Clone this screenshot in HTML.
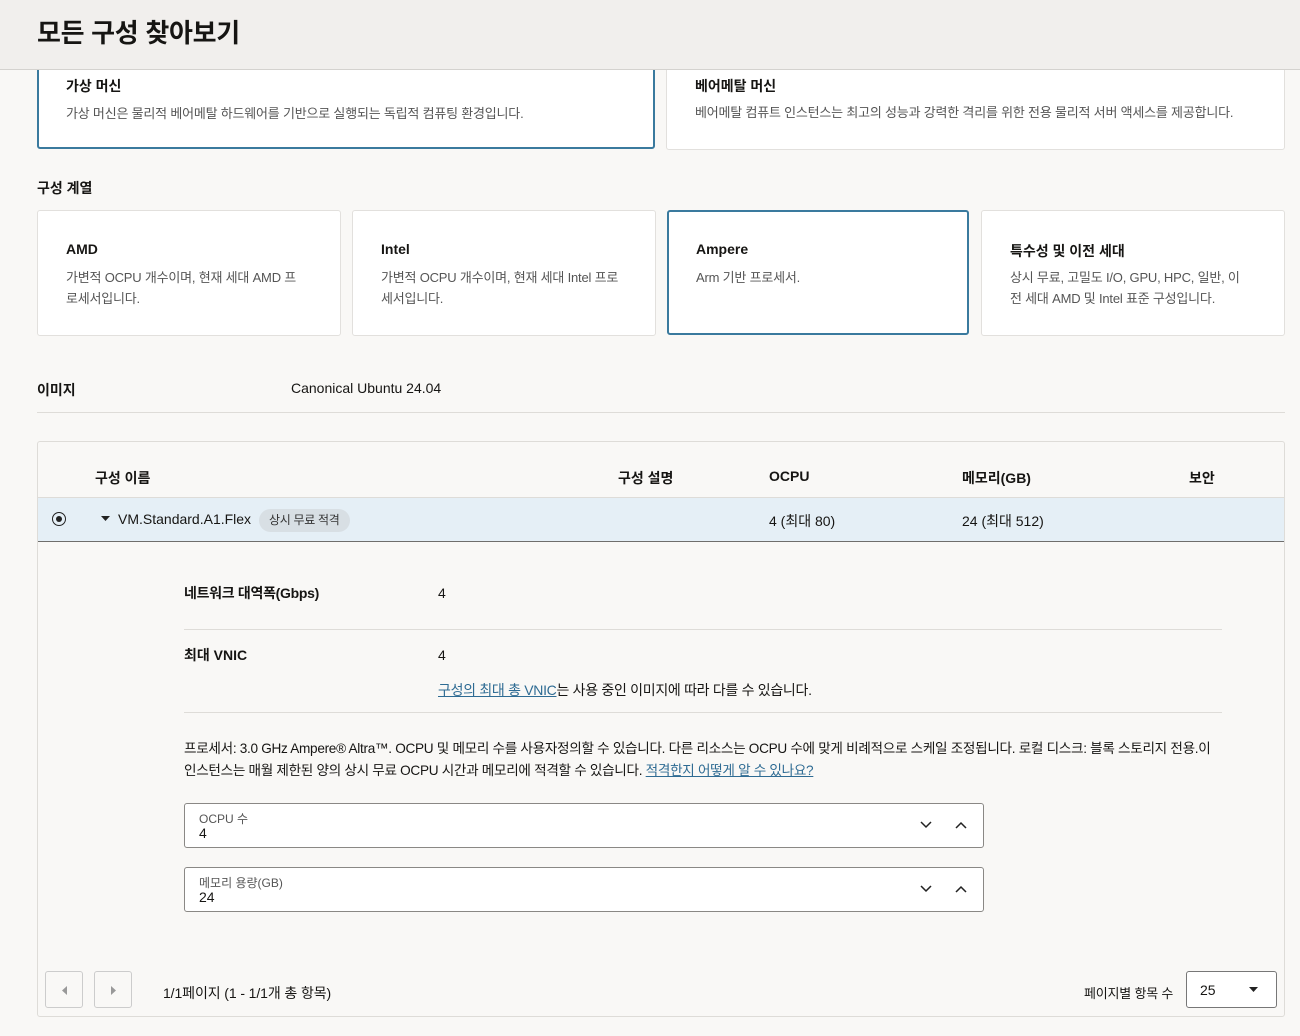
<!DOCTYPE html>
<html><head><meta charset="utf-8"><style>
*{margin:0;padding:0;box-sizing:border-box}
body{width:1300px;height:1036px;background:#f9f8f6;font-family:"Liberation Sans","Noto Sans CJK KR",sans-serif;color:#161513;position:relative;overflow:hidden;font-size:14px}
.a{position:absolute}
.card{position:absolute;background:#fff;border:1px solid #e2e0dd;border-radius:3px}
.sel{border:2px solid #3a7a9e}
.t{font-size:14px;font-weight:bold;position:absolute}
.d{font-size:13px;color:#555;position:absolute;line-height:21px;letter-spacing:-0.2px}
.line{position:absolute;height:1px;background:#dedcd8}
.inp{position:absolute;left:184px;width:800px;height:45px;background:#fff;border:1px solid #8a8885;border-radius:3px}
.inp .l{position:absolute;left:14px;top:6px;font-size:12px;color:#555}
.inp .v{position:absolute;left:14px;top:21px;font-size:14px}
.inp svg{position:absolute;top:17px}
.btn{position:absolute;top:971px;width:38px;height:37px;border:1px solid #ccc;border-radius:3px;background:#f9f8f6}
a{color:#2e6b93}
</style></head><body>
<div class="card sel" style="left:37px;top:50px;width:618px;height:99px"><div class="t" style="left:27px;top:24px">가상 머신</div><div class="d" style="left:27px;top:51px">가상 머신은 물리적 베어메탈 하드웨어를 기반으로 실행되는 독립적 컴퓨팅 환경입니다.</div></div>
<div class="card" style="left:666px;top:50px;width:619px;height:100px"><div class="t" style="left:28px;top:25px">베어메탈 머신</div><div class="d" style="left:28px;top:51px">베어메탈 컴퓨트 인스턴스는 최고의 성능과 강력한 격리를 위한 전용 물리적 서버 액세스를 제공합니다.</div></div>
<div class="a" style="left:0;top:0;width:1300px;height:70px;background:#f1efed;border-bottom:1px solid #d4d2cf"><div class="a" style="left:37px;top:13px;font-size:26px;font-weight:bold;letter-spacing:-0.3px">모든 구성 찾아보기</div></div>
<div class="a" style="left:37px;top:178px;font-size:14px;font-weight:bold">구성 계열</div>
<div class="card" style="left:37px;top:210px;width:304px;height:126px"><div class="t" style="left:28px;top:30px">AMD</div><div class="d" style="left:28px;top:56px;width:238px">가변적 OCPU 개수이며, 현재 세대 AMD 프로세서입니다.</div></div>
<div class="card" style="left:352px;top:210px;width:304px;height:126px"><div class="t" style="left:28px;top:30px">Intel</div><div class="d" style="left:28px;top:56px;width:238px">가변적 OCPU 개수이며, 현재 세대 Intel 프로세서입니다.</div></div>
<div class="card sel" style="left:667px;top:210px;width:302px;height:125px"><div class="t" style="left:27px;top:29px">Ampere</div><div class="d" style="left:27px;top:55px">Arm 기반 프로세서.</div></div>
<div class="card" style="left:981px;top:210px;width:304px;height:126px"><div class="t" style="left:28px;top:30px">특수성 및 이전 세대</div><div class="d" style="left:28px;top:56px;width:238px">상시 무료, 고밀도 I/O, GPU, HPC, 일반, 이전 세대 AMD 및 Intel 표준 구성입니다.</div></div>
<div class="a" style="left:37px;top:380px;font-weight:bold">이미지</div>
<div class="a" style="left:291px;top:380px">Canonical Ubuntu 24.04</div>
<div class="line" style="left:37px;top:412px;width:1248px"></div>
<div class="a" style="left:37px;top:441px;width:1248px;height:576px;border:1px solid #dedcd8;border-radius:3px"></div>
<div class="a" style="left:95px;top:468px;font-weight:bold">구성 이름</div>
<div class="a" style="left:618px;top:468px;font-weight:bold">구성 설명</div>
<div class="a" style="left:769px;top:468px;font-weight:bold">OCPU</div>
<div class="a" style="left:962px;top:468px;font-weight:bold">메모리(GB)</div>
<div class="a" style="left:1189px;top:468px;font-weight:bold">보안</div>
<div class="a" style="left:38px;top:497px;width:1246px;height:45px;background:#e5eff6;border-top:1px solid #dedcd8;border-bottom:1px solid #6f6e6c"></div>
<div class="a" style="left:52px;top:512px;width:14px;height:14px;border:1.5px solid #222;border-radius:50%"><div class="a" style="left:3px;top:3px;width:6px;height:6px;background:#222;border-radius:50%"></div></div>
<svg class="a" style="left:101px;top:516px" width="9" height="6"><path d="M0 0H9L4.5 5Z" fill="#222"/></svg>
<div class="a" style="left:118px;top:511px">VM.Standard.A1.Flex</div>
<div class="a" style="left:259px;top:509px;height:23px;padding:0 10px;background:#d8dfe4;border-radius:12px;font-size:12px;line-height:23px;color:#333;letter-spacing:-0.3px">상시 무료 적격</div>
<div class="a" style="left:769px;top:511px">4 (최대 80)</div>
<div class="a" style="left:962px;top:511px">24 (최대 512)</div>
<div class="a" style="left:184px;top:583px;font-weight:bold;letter-spacing:-0.3px">네트워크 대역폭(Gbps)</div>
<div class="a" style="left:438px;top:585px">4</div>
<div class="line" style="left:184px;top:629px;width:1038px"></div>
<div class="a" style="left:184px;top:645px;font-weight:bold">최대 VNIC</div>
<div class="a" style="left:438px;top:647px">4</div>
<div class="a" style="left:438px;top:680px;letter-spacing:-0.3px"><a href="#">구성의 최대 총 VNIC</a>는 사용 중인 이미지에 따라 다를 수 있습니다.</div>
<div class="line" style="left:184px;top:712px;width:1038px"></div>
<div class="a" style="left:184px;top:738px;width:1032px;line-height:22px;font-size:13.6px;letter-spacing:-0.3px">프로세서: 3.0 GHz Ampere® Altra™. OCPU 및 메모리 수를 사용자정의할 수 있습니다. 다른 리소스는 OCPU 수에 맞게 비례적으로 스케일 조정됩니다. 로컬 디스크: 블록 스토리지 전용.이 인스턴스는 매월 제한된 양의 상시 무료 OCPU 시간과 메모리에 적격할 수 있습니다. <a href="#">적격한지 어떻게 알 수 있나요?</a></div>
<div class="inp" style="top:803px"><div class="l">OCPU 수</div><div class="v">4</div><svg style="left:735px" width="12" height="8"><path d="M1 1L6 6L11 1" stroke="#222" stroke-width="1.5" fill="none"/></svg><svg style="left:770px" width="12" height="8"><path d="M1 7L6 2L11 7" stroke="#222" stroke-width="1.5" fill="none"/></svg></div>
<div class="inp" style="top:867px"><div class="l">메모리 용량(GB)</div><div class="v">24</div><svg style="left:735px" width="12" height="8"><path d="M1 1L6 6L11 1" stroke="#222" stroke-width="1.5" fill="none"/></svg><svg style="left:770px" width="12" height="8"><path d="M1 7L6 2L11 7" stroke="#222" stroke-width="1.5" fill="none"/></svg></div>
<div class="btn" style="left:45px"><svg class="a" style="left:16px;top:14px" width="5" height="9"><path d="M5 0V9L0 4.5Z" fill="#999"/></svg></div>
<div class="btn" style="left:94px"><svg class="a" style="left:16px;top:14px" width="5" height="9"><path d="M0 0V9L5 4.5Z" fill="#999"/></svg></div>
<div class="a" style="left:163px;top:983px;letter-spacing:-0.1px">1/1페이지 (1 - 1/1개 총 항목)</div>
<div class="a" style="left:1084px;top:983px;font-size:13px;letter-spacing:-0.2px">페이지별 항목 수</div>
<div class="a" style="left:1186px;top:971px;width:91px;height:37px;background:#fff;border:1px solid #777;border-radius:3px"><span class="a" style="left:13px;top:10px">25</span><svg class="a" style="left:62px;top:15px" width="9" height="6"><path d="M0 0H9L4.5 5Z" fill="#222"/></svg></div>
</body></html>
